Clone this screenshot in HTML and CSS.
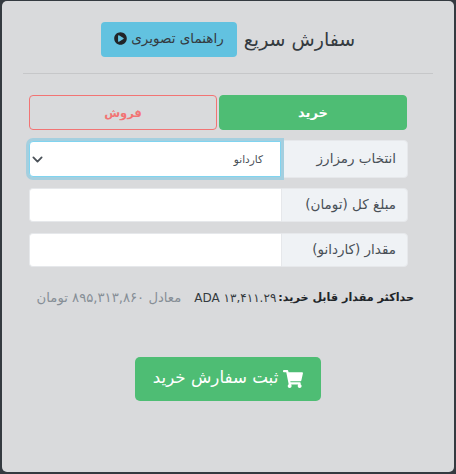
FILE: index.html
```html
<!DOCTYPE html>
<html lang="fa" dir="rtl">
<head>
<meta charset="utf-8">
<title>سفارش سریع</title>
<link rel="stylesheet" href="styles.css">
</head>
<body>
<main class="card">
  <header class="head">
    <h1 class="title">سفارش سریع</h1>
    <a class="guide">راهنمای تصویری
      <svg class="play" viewBox="0 0 512 512"><path d="M256 8C119 8 8 119 8 256s111 248 248 248 248-111 248-248S393 8 256 8zm115.700 272l-176 101c-15.800 8.800-35.700-2.500-35.700-21V152c0-18.400 19.800-29.800 35.700-21l176 107c16.400 9.200 16.400 32.900 0 42z"/></svg>
    </a>
  </header>
  <hr class="rule">
  <div class="tabs">
    <button class="tab buy">خرید</button>
    <button class="tab sell">فروش</button>
  </div>
  <div class="rows">
    <div class="row first">
      <span class="label">انتخاب رمزارز</span>
      <div class="select"><span>کاردانو</span>
        <svg class="chev" viewBox="0 0 16 16"><path d="M2 5l6 6 6-6" fill="none" stroke="#495057" stroke-width="2.600" stroke-linecap="round" stroke-linejoin="round"/></svg>
      </div>
    </div>
    <div class="row">
      <span class="label">مبلغ کل (تومان)</span>
      <input class="field" type="text">
    </div>
    <div class="row">
      <span class="label">مقدار (کاردانو)</span>
      <input class="field" type="text">
    </div>
  </div>
  <p class="info">
    <b>حداکثر مقدار قابل خرید:</b>
    <span class="amount">۱۳,۴۱۱.۲۹ ADA</span>
    <span class="muted">معادل ۸۹۵,۳۱۳,۸۶۰ تومان</span>
  </p>
  <div class="submit-wrap">
    <button class="submit">
      <svg class="cart" viewBox="0 0 576 512"><path fill="#fff" d="M528 301l47-208c3-15-8-29-23-29H159l-9-47C148 7 138 0 127 0H24C11 0 0 11 0 24v16c0 13 11 24 24 24h70l70 343c-17 10-28 28-28 49 0 31 25 56 56 56s56-25 56-56c0-16-6-30-17-40h210c-11 10-17 24-17 40 0 31 25 56 56 56s56-25 56-56c0-22-13-41-32-50l6-24c3-15-8-29-23-29H218l-7-32h293c11 0 21-8 24-19z"/></svg>
      <span class="submit-text">ثبت سفارش خرید</span>
    </button>
  </div>
</main>
</body>
</html>
```
FILE: styles.css
```css
* { box-sizing: border-box; }
html, body { margin: 0; height: 100%; }
body {
  background: #343a40;
  padding: 1px 2px 2px;
  font-family: "DejaVu Sans", sans-serif;
  color: #343a40;
}
.card {
  height: 471px;
  background: #d9dadc;
  border-radius: 5px;
  padding: 20px 21px 0;
}
.head {
  display: flex;
  justify-content: center;
  align-items: center;
  gap: 7px;
  height: 36px;
}
.title {
  margin: 0;
  font-size: 19px;
  font-weight: 400;
  line-height: 36px;
  color: #343a40;
}
.guide {
  display: flex;
  align-items: center;
  height: 35px;
  width: 136px;
  padding: 0 13px 2px;
  background: #62c2e0;
  border-radius: 4px;
  font-size: 13.500px;
  color: #343a40;
}
.play { width: 13px; height: 13px; fill: #212529; flex: none; margin-right: auto; }
.rule {
  margin: 16px 0 0;
  border: 0;
  border-top: 1px solid #c6c7c9;
}
.tabs {
  display: flex;
  gap: 2px;
  margin: 21px 26px 0 6px;
}
.tab {
  flex: 1;
  height: 35px;
  border-radius: 4px;
  font: 700 13px "DejaVu Sans", sans-serif;
  padding: 0;
}
.buy { background: #4ebd74; border: 1px solid #4ebd74; color: #fff; }
.sell { background: transparent; border: 1px solid #f27474; color: #f27474; font-size: 11.500px; }
.rows {
  display: flex;
  flex-direction: column;
  gap: 11px;
  margin: 10px 25px 0 6px;
}
.row { display: flex; height: 34px; }
.row.first { height: 38px; margin-bottom: -1px; }
.label {
  width: 127px;
  flex: none;
  display: flex;
  align-items: center;
  padding: 0 11px 2px;
  background: #eff2f5;
  border: 1px solid #e6e8eb;
  border-radius: 0 4px 4px 0;
  font-size: 13.500px;
  color: #495057;
}
.field {
  flex: 1;
  min-width: 0;
  background: #fff;
  border: 1px solid #e6e8eb;
  border-right: 0;
  border-radius: 4px 0 0 4px;
  padding: 0;
}
.select {
  flex: 1;
  display: flex;
  align-items: center;
  justify-content: space-between;
  margin: 1px 0 1px 0;
  padding: 0 17px 0 2px;
  background: #fff;
  border: 1px solid #80d4f0;
  border-radius: 4px 0 0 4px;
  box-shadow: 0 0 0 3px #a5cfdf;
  font-size: 10.500px;
  color: #495057;
}
.chev { width: 11px; height: 11px; }
.info {
  display: flex;
  align-items: center;
  margin: 22px 19px 0 0;
  font-size: 12px;
  line-height: 18px;
  color: #343a40;
  white-space: nowrap;
}
.info b { font-weight: 700; font-size: 11.200px; color: #212529; }
.amount { margin-right: 2px; }
.muted { margin-right: 13px; font-size: 13.200px; color: #868e96; }
.submit-wrap { display: flex; justify-content: center; margin-top: 50px; }
.submit {
  display: flex;
  align-items: center;
  justify-content: center;
  gap: 5px;
  width: 186px;
  height: 44px;
  background: #4ebd74;
  border: 0;
  border-radius: 5px;
  color: #fff;
  font: 400 16.700px "DejaVu Sans", sans-serif;
  padding: 0;
}
.submit-text { position: relative; top: -2px; }
.cart { width: 20px; height: 18px; flex: none; }
```
